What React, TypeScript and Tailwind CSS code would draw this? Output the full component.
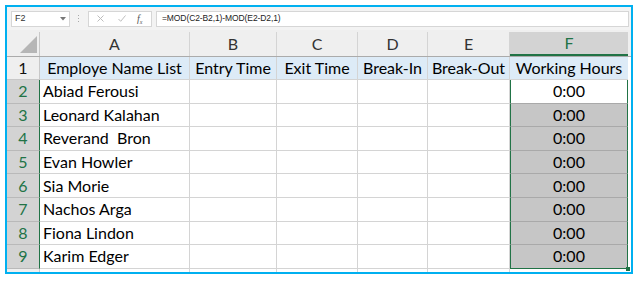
import React from "react";

const cols = [
  { key: "A", w: "w-[150px]", label: "Employe Name List" },
  { key: "B", w: "w-[87px]", label: "Entry Time" },
  { key: "C", w: "w-[81px]", label: "Exit Time" },
  { key: "D", w: "w-[70px]", label: "Break-In" },
  { key: "E", w: "w-[82px]", label: "Break-Out" },
];

const names = [
  "Abiad Ferousi",
  "Leonard Kalahan",
  "Reverand\u00a0 Bron",
  "Evan Howler",
  "Sia Morie",
  "Nachos Arga",
  "Fiona Lindon",
  "Karim Edger",
];

const font = { fontFamily: "Lato, 'Open Sans', sans-serif" };

function FormulaBar() {
  return (
    <div className="flex h-[23px] shrink-0 items-center bg-[#f3f3f3] pl-[4px] pr-[2px]">
      {/* name box */}
      <div className="flex h-[16px] w-[59px] items-center justify-between border border-[#d6d6d6] bg-white pl-[3px] pr-[3px]">
        <span className="text-[9px] text-[#333]" style={{ fontFamily: "'Liberation Sans', sans-serif" }}>
          F2
        </span>
        <svg width="6" height="4" viewBox="0 0 6 4">
          <path d="M0 0h6L3 3.5z" fill="#777" />
        </svg>
      </div>
      {/* grip dots */}
      <div className="ml-[8px] flex w-[2px] flex-col gap-[2px]">
        <span className="h-[1px] w-[1px] bg-[#aaa]" />
        <span className="h-[1px] w-[1px] bg-[#aaa]" />
        <span className="h-[1px] w-[1px] bg-[#aaa]" />
      </div>
      {/* cancel / enter / fx */}
      <div className="ml-[8px] flex h-[16px] w-[64px] items-center border border-[#d6d6d6] bg-white">
        <svg className="ml-[8px]" width="7" height="7" viewBox="0 0 7 7">
          <path d="M0.5 0.5l6 6M6.5 0.5l-6 6" stroke="#bdbdbd" strokeWidth="1" />
        </svg>
        <svg className="ml-[14px]" width="8" height="7" viewBox="0 0 8 7">
          <path d="M0.5 4l2.2 2.3L7.5 0.5" stroke="#bdbdbd" strokeWidth="1" fill="none" />
        </svg>
        <span
          className="ml-[11px] text-[10px] italic text-[#555]"
          style={{ fontFamily: "'Liberation Serif', serif" }}
        >
          f<sub className="text-[6px]">x</sub>
        </span>
      </div>
      {/* formula input */}
      <div className="ml-[4px] flex h-[16px] flex-1 items-center border border-[#d6d6d6] bg-white pl-[5px]">
        <span
          className="text-[8.5px] tracking-[-0.1px] text-[#222]"
          style={{ fontFamily: "'Liberation Sans', sans-serif" }}
        >
          =MOD(C2-B2,1)-MOD(E2-D2,1)
        </span>
      </div>
    </div>
  );
}

function ColumnHeaders() {
  return (
    <div className="flex h-[27px] shrink-0 border-b border-[#ababab] bg-[#efefef] pt-[2px]" style={font}>
      <div className="relative w-[33px] shrink-0 border-r border-[#c8c8c8]">
        <svg className="absolute bottom-[3px] right-[2px]" width="17" height="17" viewBox="0 0 17 17">
          <path d="M17 0V17H0z" fill="#b6b6b6" />
        </svg>
      </div>
      {cols.map((c) => (
        <div
          key={c.key}
          className={`${c.w} flex shrink-0 items-center justify-center border-r border-[#d4d4d4] text-[16px] text-[#333]`}
        >
          {c.key}
        </div>
      ))}
      <div className="flex w-[118px] shrink-0 items-center justify-center border-b-2 border-[#217346] bg-[#d3d3d3] text-[16px] text-[#217346]">
        F
      </div>
    </div>
  );
}

function HeaderRow() {
  return (
    <div className="flex h-[23px] shrink-0" style={font}>
      <div className="flex w-[33px] shrink-0 items-center justify-center border-r border-b border-[#c8c8c8] bg-[#efefef] text-[16px] text-[#111]">
        1
      </div>
      {cols.map((c) => (
        <div
          key={c.key}
          className={`${c.w} flex shrink-0 items-center justify-center border-r border-b border-[#d4d4d4] bg-[#ddebf7] text-[16px] text-black`}
        >
          {c.label}
        </div>
      ))}
      <div className="flex w-[118px] shrink-0 items-center justify-center border-b border-[#d4d4d4] bg-[#ddebf7] text-[16px] text-black">
        Working Hours
      </div>
    </div>
  );
}

function DataRow({ n, name }: { n: number; name: string }) {
  const first = n === 2;
  const last = n === 9;
  return (
    <div className="flex h-[23.6px] shrink-0" style={font}>
      <div className="flex w-[33px] shrink-0 items-center justify-center border-r border-b border-r-[#217346] border-b-[#b9b9b9] bg-[#d3d3d3] text-[16px] text-[#217346]">
        {n}
      </div>
      <div className="flex w-[150px] shrink-0 items-center border-r border-b border-[#d4d4d4] pl-[3px] text-[16px] text-black whitespace-pre">
        {name}
      </div>
      {cols.slice(1).map((c) => (
        <div key={c.key} className={`${c.w} shrink-0 border-r border-b border-[#d4d4d4]`} />
      ))}
      <div
        className={`relative flex w-[118px] shrink-0 items-center justify-center border-x border-[#217346] text-[16px] text-black ${
          first ? "bg-white" : "bg-[#c6c6c6]"
        } ${last ? "border-b border-b-[#217346]" : "border-b border-b-[#a9a9a9]"}`}
      >
        0:00
        {last && <span className="absolute -bottom-[3px] -right-[3px] h-[4px] w-[4px] bg-[#217346]" />}
      </div>
    </div>
  );
}

export default function App() {
  return (
    <div className="h-[282px] w-[639px] bg-white pl-[5px] pt-[5px]">
      <div className="flex h-[269px] w-[628px] flex-col overflow-hidden border-2 border-[#00b0f0] bg-white">
        <FormulaBar />
        <ColumnHeaders />
        <HeaderRow />
        {names.map((name, i) => (
          <DataRow key={name} n={i + 2} name={name} />
        ))}
        <div className="flex flex-1">
          <div className="w-[33px] shrink-0 border-r border-[#c8c8c8] bg-[#efefef]" />
          <div className="w-[150px] shrink-0 border-r border-[#d4d4d4]" />
          <div className="w-[87px] shrink-0 border-r border-[#d4d4d4]" />
          <div className="w-[81px] shrink-0 border-r border-[#d4d4d4]" />
          <div className="w-[70px] shrink-0 border-r border-[#d4d4d4]" />
          <div className="w-[82px] shrink-0 border-r border-[#d4d4d4]" />
        </div>
      </div>
    </div>
  );
}
